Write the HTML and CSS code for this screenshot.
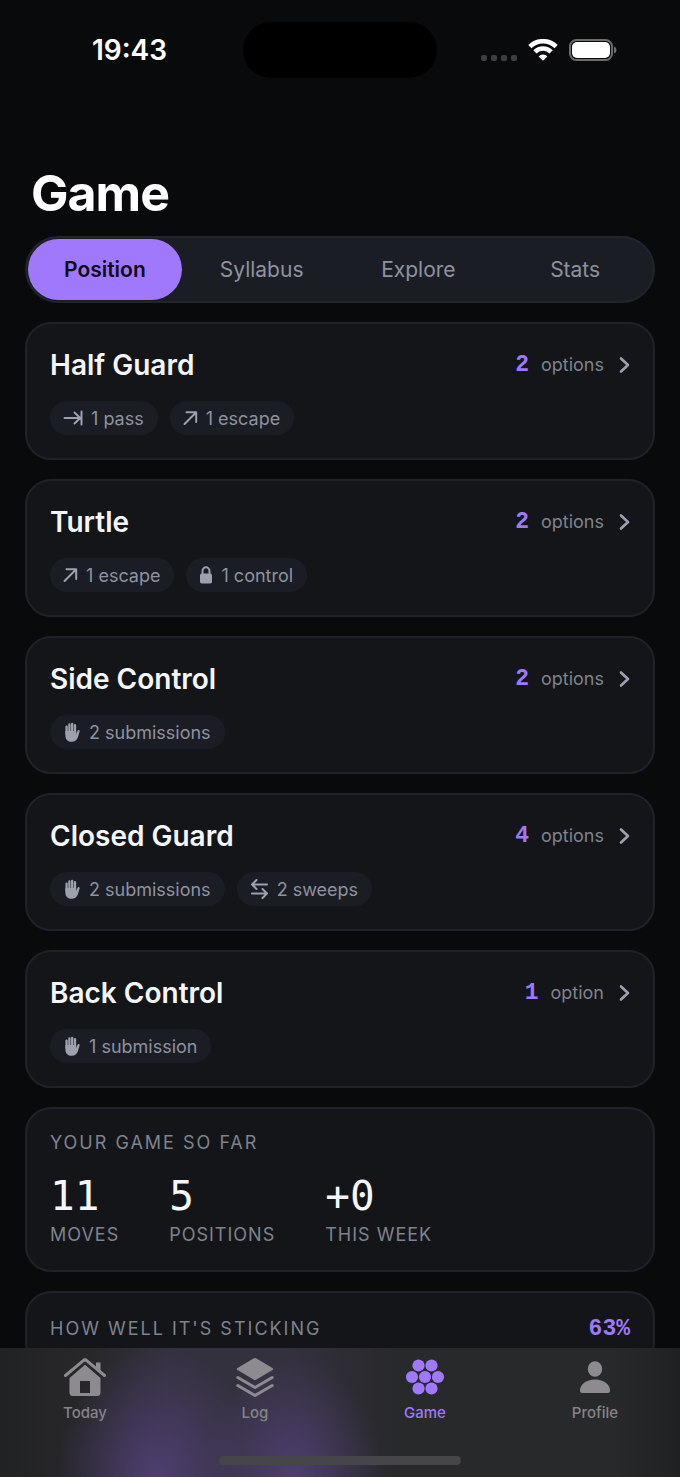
FILE: index.html
```html
<!DOCTYPE html>
<html lang="en">
<head>
  <meta charset="UTF-8">
  <meta name="viewport" content="width=device-width, initial-scale=1.0">
  <title>Game</title>
  <link rel="stylesheet" href="styles.css">
</head>
<body>
  <!-- Shared icons -->
  <svg class="sprite" aria-hidden="true">
    <symbol id="icon-pass" viewBox="0 0 20 20">
      <path d="M1.5 10H17.5M11.5 4.5L17.2 10L11.5 15.5M18.5 3.5V16.5" />
    </symbol>
    <symbol id="icon-escape" viewBox="0 0 15 20">
      <path d="M1.5 16L13 4.5M3.5 4.3H13.2V14" />
    </symbol>
    <symbol id="icon-sweep" viewBox="0 0 19 20">
      <path d="M17 5.5H2M6.5 1L2 5.5L6.5 10M2 14.5H17M12.5 10L17 14.5L12.5 19" />
    </symbol>
    <symbol id="icon-control" viewBox="0 0 14 20">
      <rect class="solid" x="1" y="8.5" width="12" height="10" rx="1.8" />
      <path d="M3.5 9V6a3.5 3.8 0 0 1 7 0V9" />
    </symbol>
    <symbol id="icon-hand" viewBox="0 0 18 20">
      <path class="finger" d="M3.6 4.6V12M6.4 2.4V11M9.2 1.8V11M12 3.2V12" />
      <path class="solid" d="M2.4 9H13.2V12.2C13.8 11.3 14 10 14.5 8.800C15 7.600 16.900 8 16.600 9.500L15 15C14 18 12 19.800 8.700 19.800C4.800 19.800 2.400 17.500 2.400 13.500Z" />
    </symbol>
    <symbol id="icon-chevron" viewBox="0 0 12 20">
      <path d="M3 3.5L10 10L3 16.5" />
    </symbol>
  </svg>

  <div class="app">
    <!-- Status bar -->
    <div class="status-bar">
      <div class="time">19:43</div>
      <div class="island"></div>
      <div class="status-icons">
        <div class="signal"><i></i><i></i><i></i><i></i></div>
        <svg class="wifi" viewBox="0 0 30 22" aria-hidden="true">
          <path d="M1.9 7.6a18.5 18.5 0 0 1 26.2 0" />
          <path d="M6.900 12.900a11.500 11.500 0 0 1 16.200 0" />
          <path class="dot" d="M15 21.800L10.600 17.400a6 6 0 0 1 8.800 0z" />
        </svg>
        <svg class="battery" viewBox="0 0 48 22" aria-hidden="true">
          <rect class="shell" x="1" y="1" width="42" height="20" rx="6.5" />
          <rect class="charge" x="3" y="3" width="38" height="16" rx="5" />
          <path class="cap" d="M45 7.500c3.300 1 3.300 6 0 7z" />
        </svg>
      </div>
    </div>

    <main class="content">
      <h1 class="title">Game</h1>

      <div class="segments" role="tablist">
        <button class="segment active" role="tab" aria-selected="true">Position</button>
        <button class="segment" role="tab">Syllabus</button>
        <button class="segment" role="tab">Explore</button>
        <button class="segment" role="tab">Stats</button>
      </div>

      <!-- Positions -->
      <a class="card" href="#half-guard">
        <div class="card-head">
          <h2>Half Guard</h2>
          <span class="count">2</span>
          <span class="unit">options</span>
          <svg class="icon chevron"><use href="#icon-chevron" /></svg>
        </div>
        <div class="chips">
          <span class="chip"><svg class="icon pass"><use href="#icon-pass" /></svg>1 pass</span>
          <span class="chip"><svg class="icon escape"><use href="#icon-escape" /></svg>1 escape</span>
        </div>
      </a>

      <a class="card" href="#turtle">
        <div class="card-head">
          <h2>Turtle</h2>
          <span class="count">2</span>
          <span class="unit">options</span>
          <svg class="icon chevron"><use href="#icon-chevron" /></svg>
        </div>
        <div class="chips">
          <span class="chip"><svg class="icon escape"><use href="#icon-escape" /></svg>1 escape</span>
          <span class="chip"><svg class="icon control"><use href="#icon-control" /></svg>1 control</span>
        </div>
      </a>

      <a class="card" href="#side-control">
        <div class="card-head">
          <h2>Side Control</h2>
          <span class="count">2</span>
          <span class="unit">options</span>
          <svg class="icon chevron"><use href="#icon-chevron" /></svg>
        </div>
        <div class="chips">
          <span class="chip"><svg class="icon hand"><use href="#icon-hand" /></svg>2 submissions</span>
        </div>
      </a>

      <a class="card" href="#closed-guard">
        <div class="card-head">
          <h2>Closed Guard</h2>
          <span class="count">4</span>
          <span class="unit">options</span>
          <svg class="icon chevron"><use href="#icon-chevron" /></svg>
        </div>
        <div class="chips">
          <span class="chip"><svg class="icon hand"><use href="#icon-hand" /></svg>2 submissions</span>
          <span class="chip"><svg class="icon sweep"><use href="#icon-sweep" /></svg>2 sweeps</span>
        </div>
      </a>

      <a class="card" href="#back-control">
        <div class="card-head">
          <h2>Back Control</h2>
          <span class="count">1</span>
          <span class="unit">option</span>
          <svg class="icon chevron"><use href="#icon-chevron" /></svg>
        </div>
        <div class="chips">
          <span class="chip"><svg class="icon hand"><use href="#icon-hand" /></svg>1 submission</span>
        </div>
      </a>

      <!-- Totals -->
      <section class="card">
        <h3 class="label">YOUR GAME SO FAR</h3>
        <div class="totals">
          <div class="total"><strong>11</strong><span>MOVES</span></div>
          <div class="total"><strong>5</strong><span>POSITIONS</span></div>
          <div class="total"><strong>+0</strong><span>THIS WEEK</span></div>
        </div>
      </section>

      <section class="card">
        <div class="sticking">
          <h3 class="label">HOW WELL IT'S STICKING</h3>
          <span class="count">63%</span>
        </div>
      </section>
    </main>

    <!-- Tab bar -->
    <nav class="tab-bar">
      <a class="tab" href="#today">
        <svg viewBox="0 0 44 40" aria-hidden="true">
          <path class="roof" d="M2.5 18.5L20 3.8Q22 2 24 3.8L41.5 18.5" />
          <path d="M33 5.5h4.5v9L33 10.7z" />
          <path fill-rule="evenodd" d="M22 7.8L37.5 21v14.5q0 3.5-3.5 3.5H10q-3.5 0-3.500-3.500V21zM17 24v12h10V24z" />
        </svg>
        <span>Today</span>
      </a>
      <a class="tab" href="#log">
        <svg viewBox="0 0 44 40" aria-hidden="true">
          <path d="M20.5 1.5Q22 .5 23.5 1.5L39.5 11Q41 12 39.5 13L23.5 22.5Q22 23.5 20.5 22.5L4.5 13Q3 12 4.5 11Z" />
          <path class="layer" d="M4.8 20.5L22 30.5L39.2 20.5M4.8 28.5L22 38.5L39.2 28.5" />
        </svg>
        <span>Log</span>
      </a>
      <a class="tab active" href="#game">
        <svg viewBox="0 0 44 40" aria-hidden="true">
          <circle cx="15.5" cy="8.5" r="6.1" />
          <circle cx="28.5" cy="8.5" r="6.1" />
          <circle cx="9" cy="20" r="6.1" />
          <circle cx="22" cy="20" r="6.1" />
          <circle cx="35" cy="20" r="6.1" />
          <circle cx="15.5" cy="31.5" r="6.1" />
          <circle cx="28.5" cy="31.5" r="6.1" />
        </svg>
        <span>Game</span>
      </a>
      <a class="tab" href="#profile">
        <svg viewBox="0 0 44 40" aria-hidden="true">
          <ellipse cx="22" cy="12" rx="7.2" ry="7.8" />
          <path d="M7 33.5C7 27.5 13 22.5 22 22.5S37 27.5 37 33.5Q37 36 34.5 36H9.5Q7 36 7 33.500Z" />
        </svg>
        <span>Profile</span>
      </a>
      <div class="home-indicator"></div>
    </nav>
  </div>
</body>
</html>
```
FILE: styles.css
```css
* {
  box-sizing: border-box;
  margin: 0;
  padding: 0;
}

body {
  font-family: Inter, 'Liberation Sans', sans-serif;
  background-color: #090A0C;
  color: #F5F6FA;
}

a {
  color: inherit;
  text-decoration: none;
}

.sprite {
  display: none;
}

.app {
  display: flex;
  flex-direction: column;
  height: 100vh;
}

/* Status bar */
.status-bar {
  display: grid;
  grid-template-columns: 1fr 194px 1fr;
  align-items: center;
  flex-shrink: 0;
  padding: 22px 0;
}

.time {
  padding-left: 16px;
  font-size: 28px;
  font-weight: 600;
  line-height: 34px;
  text-align: center;
  color: #FFFFFF;
}

.island {
  height: 56px;
  border-radius: 28px;
  background-color: #000000;
}

.status-icons {
  display: flex;
  justify-content: center;
  align-items: center;
  gap: 11px;
  padding-right: 19px;
}

.signal {
  display: flex;
  align-self: flex-end;
  gap: 4px;
}

.signal i {
  width: 6px;
  height: 6px;
  border-radius: 2px;
  background-color: #3D3E40;
}

.wifi {
  width: 30px;
  height: 22px;
  fill: none;
  stroke: #FFFFFF;
  stroke-width: 4.5;
}

.wifi .dot {
  fill: #FFFFFF;
  stroke: none;
}

.battery {
  width: 48px;
  height: 22px;
}

.battery .shell {
  fill: none;
  stroke: #6C6D6E;
  stroke-width: 2;
}

.battery .charge {
  fill: #FFFFFF;
}

.battery .cap {
  fill: #6C6D6E;
}

/* Content */
.content {
  display: flex;
  flex: 1;
  flex-direction: column;
  gap: 19px;
  min-height: 0;
  padding: 61px 25px 0;
  overflow: hidden;
}

.title {
  padding-left: 6px;
  font-size: 50px;
  font-weight: 700;
  line-height: 64px;
  letter-spacing: -1px;
  color: #FFFFFF;
}

.segments {
  display: grid;
  grid-template-columns: repeat(4, 1fr);
  flex-shrink: 0;
  gap: 3px;
  margin-top: -8px;
  padding: 1px;
  border: 2px solid #20242B;
  border-radius: 34px;
  background-color: #1B1D25;
}

.segment {
  height: 61px;
  border: none;
  border-radius: 31px;
  background: none;
  color: #8E929D;
  font-family: inherit;
  font-size: 21px;
  cursor: pointer;
}

.segment.active {
  background-color: #9F78FB;
  color: #0E0A1A;
  font-weight: 600;
}

.card {
  display: block;
  flex-shrink: 0;
  padding: 22px 23px 23px;
  border: 2px solid #1F2228;
  border-radius: 26px;
  background-color: #141519;
}

.card-head {
  display: flex;
  align-items: center;
  line-height: 38px;
}

.card-head h2 {
  flex: 1;
  font-size: 28px;
  font-weight: 600;
}

.count {
  font-family: 'Liberation Mono', monospace;
  font-size: 23px;
  font-weight: 700;
  color: #9F78FB;
}

.unit {
  margin: 0 14px 0 12px;
  font-size: 18px;
  color: #7E838E;
}

.chips {
  display: flex;
  gap: 12px;
  margin-top: 17px;
}

.chip {
  display: flex;
  align-items: center;
  gap: 8px;
  height: 34px;
  padding: 0 14px 0 13px;
  border-radius: 17px;
  background-color: #1B1D25;
  color: #8E929D;
  font-size: 18px;
}

.icon {
  height: 20px;
  fill: none;
  stroke: #9CA1AD;
  stroke-width: 2;
  stroke-linecap: round;
  stroke-linejoin: round;
}

.solid {
  fill: #9CA1AD;
  stroke: none;
}

.finger {
  stroke-width: 2.3;
}

.pass { width: 20px; }
.escape { width: 15px; }
.control { width: 14px; }
.hand { width: 18px; }
.sweep { width: 19px; }

.chevron {
  width: 12px;
  stroke-width: 2.6;
}

/* Totals */
.label {
  font-size: 18px;
  font-weight: 400;
  line-height: 24px;
  letter-spacing: 2px;
  color: #7E838E;
}

.totals {
  display: flex;
  gap: 50px;
  margin-top: 19px;
}

.total {
  display: flex;
  flex-direction: column;
  gap: 5px;
}

.total strong {
  font-family: 'DejaVu Sans Mono', monospace;
  font-size: 41px;
  font-weight: 400;
  line-height: 44px;
}

.total span {
  font-size: 18px;
  line-height: 24px;
  letter-spacing: 1px;
  color: #7E838E;
}

.sticking {
  display: flex;
  justify-content: space-between;
  align-items: center;
  height: 28px;
}

/* Tab bar */
.tab-bar {
  display: grid;
  grid-template-columns: repeat(4, 1fr);
  flex-shrink: 0;
  row-gap: 34px;
  padding: 9px 0 12px;
  background:
    radial-gradient(ellipse 100px 130px at 23% 100%, #4E3E70, rgba(78, 62, 112, 0)),
    radial-gradient(ellipse 90px 120px at 43% 100%, #4E3E70, rgba(78, 62, 112, 0)),
    linear-gradient(90deg, #212223, #28282B 14%, #34313E 25%, #34313E 42%, #28292B 58%, #28292B 90%, #202122);
}

.tab {
  display: flex;
  flex-direction: column;
  align-items: center;
  gap: 7px;
  color: #848487;
  font-size: 15px;
  font-weight: 500;
  line-height: 18px;
}

.tab svg {
  width: 44px;
  height: 40px;
  fill: #8D8B90;
}

.roof,
.layer {
  fill: none;
  stroke: #8D8B90;
  stroke-width: 3;
  stroke-linecap: round;
  stroke-linejoin: round;
}

.tab.active {
  color: #9F78FB;
}

.tab.active svg {
  fill: #9F78FB;
}

.home-indicator {
  grid-column: 1 / -1;
  justify-self: center;
  width: 242px;
  height: 9px;
  border-radius: 5px;
  background-color: #464549;
}
```
